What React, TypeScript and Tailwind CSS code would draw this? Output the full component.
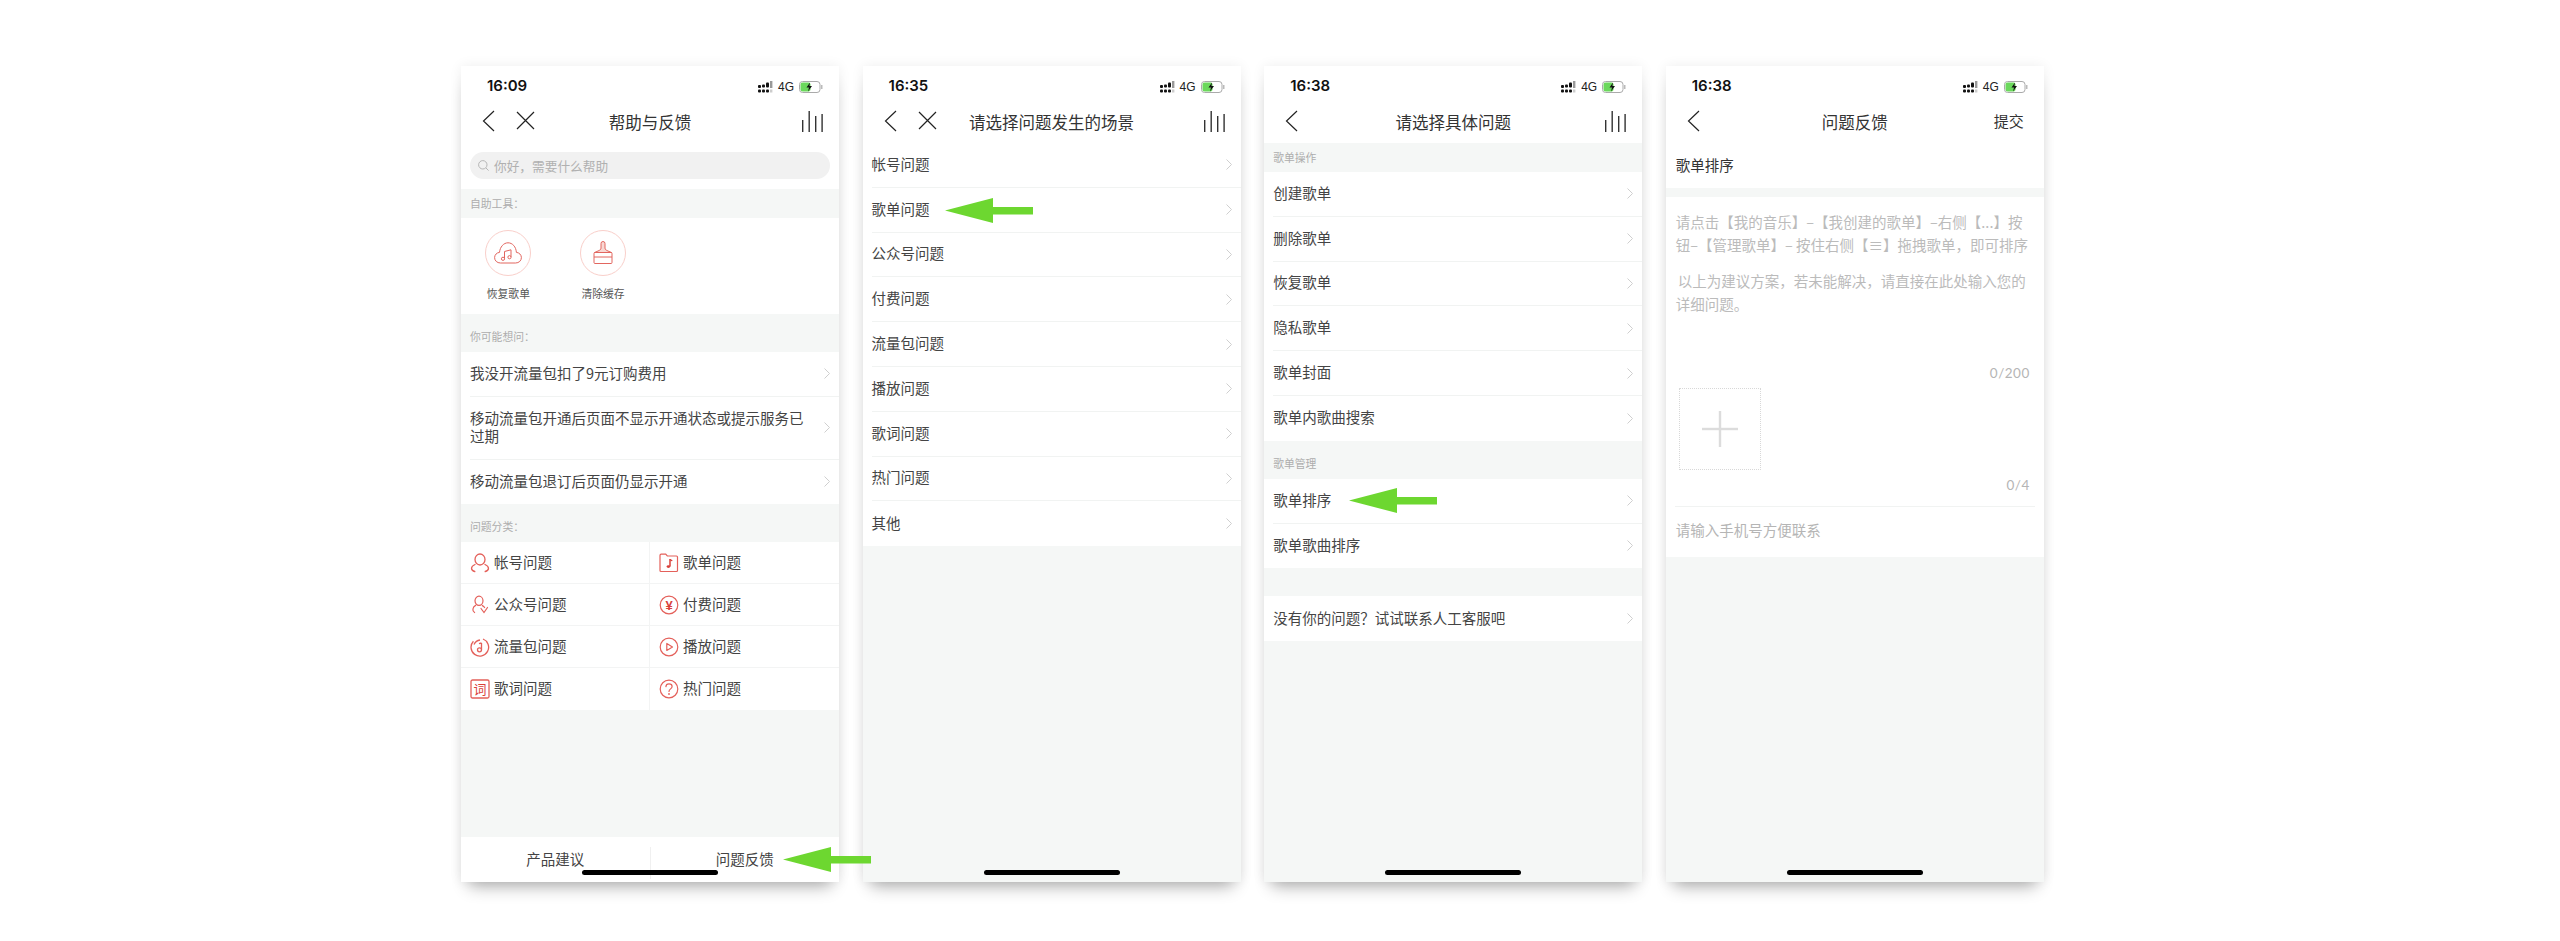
import React from 'react';

const cjk = { fontFamily: '"Noto Sans CJK SC", "Noto Sans", sans-serif' };
const RED = '#e4605a';

function StatusBar({ time }: { time: string }) {
  return (
    <div className="flex h-[34px] shrink-0 items-end justify-between pl-[26px] pr-[16px] pb-[4.500px]">
      <span className="text-[15px] leading-[20px] font-semibold text-[#111]" style={{ fontFamily: 'Inter, sans-serif' }}>{time}</span>
      <div className="flex items-center gap-[5px] pb-[2px]">
        <svg width="15" height="12" viewBox="0 0 15 12">
          <g fill="#111">
            <rect x="0" y="4" width="3" height="3" rx="1" />
            <rect x="0" y="8.500" width="3" height="3" rx="1" />
            <rect x="4" y="3.500" width="3" height="3" rx="1" />
            <rect x="4" y="8.500" width="3" height="3" rx="1" />
            <rect x="8" y="1.500" width="3" height="5" rx="1" />
            <rect x="8" y="8.500" width="3" height="3" rx="1" />
          </g>
          <rect x="12" y="0" width="2.400" height="7" fill="#999" />
          <rect x="12" y="8.500" width="2.400" height="3" fill="#ccc" />
        </svg>
        <span className="text-[12px] leading-[14px] text-[#222]" style={{ fontFamily: '"Liberation Sans", sans-serif' }}>4G</span>
        <svg width="24" height="12" viewBox="0 0 24 12">
          <rect x="0.500" y="0.500" width="20.500" height="11" rx="3" fill="#fff" stroke="#aaa" />
          <rect x="1.500" y="1.500" width="10" height="9" rx="2" fill="#6bd85c" />
          <path d="M11 1.500 7.500 6.600h2.500l-1 3.900 4-5.400h-2.600z" fill="#111" />
          <rect x="22.200" y="4" width="1.200" height="4" fill="#aaa" />
        </svg>
      </div>
    </div>
  );
}

function BackIcon() {
  return (
    <svg width="13" height="22" viewBox="0 0 13 22" fill="none" stroke="#222" strokeWidth="1.200">
      <path d="M12 1 1.500 11 12 21" />
    </svg>
  );
}

function CloseIcon() {
  return (
    <svg width="19" height="19" viewBox="0 0 19 19" fill="none" stroke="#222" strokeWidth="1.200">
      <path d="M1 1 18 18M18 1 1 18" />
    </svg>
  );
}

function BarsIcon() {
  return (
    <svg width="21" height="21" viewBox="0 0 21 21" fill="#333">
      <rect x="0" y="9" width="1.400" height="12" />
      <rect x="6.500" y="0" width="1.400" height="21" />
      <rect x="13" y="5" width="1.400" height="16" />
      <rect x="19.400" y="3" width="1.400" height="18" />
    </svg>
  );
}

function NavBar({ title, close, right }: { title: string; close?: boolean; right?: React.ReactNode }) {
  return (
    <div className="grid h-[43px] shrink-0 grid-cols-[1fr_auto_1fr] items-center bg-white px-[21px]">
      <div className="flex items-center gap-[21px] pb-[2px]">
        <BackIcon />
        {close && <CloseIcon />}
      </div>
      <div className="text-[16.500px] leading-[24px] text-[#333]" style={cjk}>{title}</div>
      <div className="-mr-[5px] flex justify-end pb-[1px]">{right ?? <BarsIcon />}</div>
    </div>
  );
}

function Chevron() {
  return (
    <svg width="6" height="11" viewBox="0 0 6 11" fill="none" stroke="#cfcfcf" strokeWidth="1" className="shrink-0">
      <path d="M.5.5 5.500 5.500.5 10.500" />
    </svg>
  );
}

function Row({ label, last }: { label: React.ReactNode; last?: boolean }) {
  return (
    <div className="bg-white pl-[9px]">
      <div className={`flex h-[44.800px] items-center justify-between pr-[9px] ${last ? '' : 'border-b border-[#f1f3f2]'}`}>
        <span className="pb-[2px] text-[14.500px] leading-[18px] text-[#444]" style={cjk}>{label}</span>
        <Chevron />
      </div>
    </div>
  );
}

function SectionLabel({ children, tall }: { children: string; tall?: boolean }) {
  return (
    <div className={`flex items-end pl-[9px] text-[10.800px] text-[#adadad] ${tall ? 'h-[38px] pb-[8px]' : 'h-[29px] pb-[7px]'}`} style={cjk}>
      <span className="leading-[16px]">{children}</span>
    </div>
  );
}

function HomeBar() {
  return <div className="absolute bottom-[7px] left-[121px] h-[5px] w-[136px] rounded-full bg-black" />;
}

function Arrow({ className }: { className: string }) {
  return (
    <svg width="88" height="25" viewBox="0 0 88 25" className={`absolute z-10 ${className}`}>
      <path d="M0 12.500 48 0v9h40v7.500H48V25z" fill="#6dd730" />
    </svg>
  );
}

function Phone({ children }: { children: React.ReactNode }) {
  return (
    <div className="relative flex h-[816px] w-[378px] shrink-0 flex-col bg-[#f5f7f6] shadow-[0_12px_16px_-8px_rgba(0,0,0,0.32),0_0_12px_rgba(0,0,0,0.07)]">
      {children}
    </div>
  );
}

// category icons
function PersonIcon() {
  return (
    <svg width="20" height="20" viewBox="0 0 20 20" fill="none" stroke={RED} strokeWidth="1.300">
      <ellipse cx="10" cy="6.500" rx="5" ry="5.500" />
      <path d="M4.800 18.500C.6 17.500.2 13.500 5 11.500M15.200 18.500c4.200-1 4.600-5-.2-7" strokeLinecap="round" />
    </svg>
  );
}

function FolderIcon() {
  return (
    <svg width="20" height="20" viewBox="0 0 20 20" fill="none" stroke={RED} strokeWidth="1.200">
      <path d="M1 2.500c0-.8.5-1.300 1.200-1.300h4.500l1.600 1.800h9.200c.6 0 1 .5 1 1v13.500c0 .6-.4 1-1 1H2c-.6 0-1-.4-1-1z" />
      <path d="M11 6v7.500" stroke="#d9403a" strokeWidth="1.500" />
      <path d="M11 6.200c.5 1 1.600 1.300 2.300 1.600" stroke="#d9403a" />
      <ellipse cx="9.400" cy="13.600" rx="1.800" ry="1.400" fill="#d9403a" stroke="none" />
    </svg>
  );
}

function SubscribeIcon() {
  return (
    <svg width="20" height="20" viewBox="0 0 20 20" fill="none" stroke={RED} strokeWidth="1.200">
      <ellipse cx="9" cy="5.800" rx="4" ry="4.600" />
      <path d="M4.600 17.500C1.800 16 2.600 12 5.600 10.400M12.400 10.600c1 .5 1.700 1.100 2.200 1.900" strokeLinecap="round" />
      <path d="M11 13.500l3 4 3.500-5" strokeLinecap="round" />
    </svg>
  );
}

function YenIcon() {
  return (
    <svg width="20" height="20" viewBox="0 0 20 20" fill="none" stroke={RED} strokeWidth="1.200">
      <circle cx="10" cy="10" r="8.800" />
      <text x="10" y="15" textAnchor="middle" fontSize="13" fill="#d9403a" stroke="none" fontWeight="700" fontFamily='"Liberation Sans", sans-serif'>¥</text>
    </svg>
  );
}

function DiscIcon() {
  return (
    <svg width="20" height="20" viewBox="0 0 20 20" fill="none" stroke={RED} strokeWidth="1.300">
      <path d="M13 2A8.800 8.800 0 1 1 3.400 4.200" />
      <path d="M4 7.500C5.200 5 7.500 3.400 10 3" />
      <path d="M11.500 6v6.500" />
      <circle cx="9.500" cy="12.800" r="2" />
      <path d="M11.500 6l-2.500.7" />
    </svg>
  );
}

function PlayIcon() {
  return (
    <svg width="20" height="20" viewBox="0 0 20 20" fill="none" stroke={RED} strokeWidth="1.200">
      <circle cx="10" cy="10" r="8.800" />
      <path d="M7.800 6.500v7l5.700-3.500z" strokeLinejoin="round" />
    </svg>
  );
}

function LyricIcon() {
  return (
    <svg width="20" height="20" viewBox="0 0 20 20" fill="none" stroke={RED} strokeWidth="1.300">
      <rect x="1" y="1" width="18" height="18" rx="1.500" />
      <text x="10" y="15.200" textAnchor="middle" fontSize="13" fill="#d9403a" stroke="none" fontFamily='"Noto Sans CJK SC", sans-serif'>词</text>
    </svg>
  );
}

function HelpIcon() {
  return (
    <svg width="20" height="20" viewBox="0 0 20 20" fill="none" stroke={RED} strokeWidth="1.200">
      <circle cx="10" cy="10" r="8.800" />
      <path d="M6.900 7.600C7 5.700 8.400 4.800 10 4.800c1.800 0 3.100 1.100 3.100 2.700 0 2.400-3.100 2.400-3.100 5" strokeLinecap="round" />
      <circle cx="10" cy="15" r=".9" fill={RED} stroke="none" />
    </svg>
  );
}

function CloudIcon() {
  return (
    <svg width="28" height="22" viewBox="0 0 28 22" fill="none" stroke="#e2665f" strokeWidth="1">
      <path d="M6.500 21C3 21 .6 18.600.6 15.600c0-2.800 2.200-5 4.900-5.200C6 5 9.600.8 14 .8c4.500 0 8 4 8.400 9.600 2.800.2 5 2.400 5 5.200 0 3-2.400 5.400-5.900 5.400z" />
      <path d="M10.500 9.500l6.500-1.700v7" />
      <path d="M10.500 9.500v7" />
      <circle cx="9" cy="16.800" r="1.600" />
      <circle cx="15.500" cy="15.200" r="1.600" />
    </svg>
  );
}

function BrushIcon() {
  return (
    <svg width="20" height="24" viewBox="0 0 20 24" fill="none" stroke="#e2665f" strokeWidth="1">
      <path d="M8 7V2.500a2 2 0 0 1 4 0V7c0 1.500 1 2.200 3 3l3.500 1.500H1.500L5 10c2-.8 3-1.500 3-3z" fill="#f8d8d4" />
      <rect x="1" y="11.500" width="18" height="11" rx="1" />
      <path d="M1 16h18" />
    </svg>
  );
}

function HelpScreen() {
  const faq = ['我没开流量包扣了9元订购费用', '移动流量包开通后页面不显示开通状态或提示服务已过期', '移动流量包退订后页面仍显示开通'];
  const tools: [string, React.ReactNode][] = [
    ['恢复歌单', <CloudIcon />],
    ['清除缓存', <BrushIcon />],
  ];
  const cats: [React.ReactNode, string][] = [
    [<PersonIcon />, '帐号问题'],
    [<FolderIcon />, '歌单问题'],
    [<SubscribeIcon />, '公众号问题'],
    [<YenIcon />, '付费问题'],
    [<DiscIcon />, '流量包问题'],
    [<PlayIcon />, '播放问题'],
    [<LyricIcon />, '歌词问题'],
    [<HelpIcon />, '热门问题'],
  ];
  return (
    <Phone>
      <div className="bg-white"><StatusBar time="16:09" /></div>
      <NavBar title="帮助与反馈" close />
      <div className="h-[46px] shrink-0 bg-white px-[9px] pt-[9px]">
        <div className="flex h-[27px] items-center gap-[5px] rounded-full bg-[#f1f1f1] pl-[8px] text-[12.700px] text-[#b0b0b0]" style={cjk}>
          <svg width="11" height="11" viewBox="0 0 11 11" fill="none" stroke="#b5b5b5" strokeWidth="1">
            <circle cx="4.800" cy="4.800" r="4.200" />
            <path d="M8 8l2.600 2.600" />
          </svg>
          你好，需要什么帮助
        </div>
      </div>
      <SectionLabel>自助工具：</SectionLabel>
      <div className="flex h-[96px] shrink-0 bg-white pt-[12px]">
        {tools.map(([label, icon]) => (
          <div key={label} className="flex w-[94.700px] flex-col items-center">
            <div className="flex h-[46px] w-[46px] items-center justify-center rounded-full border border-[#f9cfca]">{icon}</div>
            <div className="mt-[8px] text-[10.800px] leading-[18px] text-[#555]" style={cjk}>{label}</div>
          </div>
        ))}
      </div>
      <SectionLabel tall>你可能想问：</SectionLabel>
      <div className="bg-white pl-[9px]">
        {faq.map((q, i) => (
          <div key={q} className={`flex items-center justify-between pr-[9px] ${i === 1 ? 'h-[63px]' : 'h-[44.500px]'} ${i < 2 ? 'border-b border-[#f1f3f2]' : ''}`}>
            <span className="w-[340px] pb-[2px] text-[14.500px] leading-[18px] text-[#444]" style={cjk}>{q}</span>
            <Chevron />
          </div>
        ))}
      </div>
      <SectionLabel tall>问题分类：</SectionLabel>
      <div className="grid shrink-0 grid-cols-2 bg-white">
        {cats.map(([icon, label], i) => (
          <div key={label} className={`flex h-[42px] items-center gap-[4px] pl-[9px] ${i < 6 ? 'border-b border-[#f3f4f4]' : ''} ${i % 2 === 0 ? 'border-r border-[#f3f4f4]' : ''}`}>
            {icon}
            <span className="pb-[2px] text-[14.500px] text-[#444]" style={cjk}>{label}</span>
          </div>
        ))}
      </div>
      <div className="flex-1" />
      <div className="flex h-[45px] shrink-0 bg-white text-[14.500px] text-[#444]" style={cjk}>
        <div className="mt-[10px] flex h-[32px] flex-1 items-center justify-center border-r border-[#f0f0f0] pb-[8px]">产品建议</div>
        <div className="mt-[10px] flex h-[32px] flex-1 items-center justify-center pb-[8px]">问题反馈</div>
      </div>
      <HomeBar />
      <Arrow className="left-[322px] top-[781px]" />
    </Phone>
  );
}

function SceneScreen() {
  const items = ['帐号问题', '歌单问题', '公众号问题', '付费问题', '流量包问题', '播放问题', '歌词问题', '热门问题', '其他'];
  return (
    <Phone>
      <div className="bg-white"><StatusBar time="16:35" /></div>
      <NavBar title="请选择问题发生的场景" close />
      {items.map((t, i) => <Row key={t} label={t} last={i === items.length - 1} />)}
      <HomeBar />
      <Arrow className="left-[82px] top-[132px]" />
    </Phone>
  );
}

function TopicScreen() {
  const ops = ['创建歌单', '删除歌单', '恢复歌单', '隐私歌单', '歌单封面', '歌单内歌曲搜索'];
  return (
    <Phone>
      <div className="bg-white"><StatusBar time="16:38" /></div>
      <NavBar title="请选择具体问题" />
      <SectionLabel>歌单操作</SectionLabel>
      {ops.map((t, i) => <Row key={t} label={t} last={i === ops.length - 1} />)}
      <SectionLabel tall>歌单管理</SectionLabel>
      <Row label="歌单排序" />
      <Row label="歌单歌曲排序" last />
      <div className="h-[28px] shrink-0" />
      <Row label="没有你的问题？试试联系人工客服吧" last />
      <HomeBar />
      <Arrow className="left-[85px] top-[422px]" />
    </Phone>
  );
}

function FeedbackScreen() {
  return (
    <Phone>
      <div className="bg-white"><StatusBar time="16:38" /></div>
      <NavBar title="问题反馈" right={<span className="pr-[4px] text-[15px] leading-[24px] text-[#333]" style={cjk}>提交</span>} />
      <div className="flex h-[45px] shrink-0 items-center bg-white pb-[2px] pl-[10px] text-[14.500px] text-[#333]" style={cjk}>歌单排序</div>
      <div className="mt-[9px] flex h-[360px] shrink-0 flex-col bg-white text-[#bbbbbb]" style={cjk}>
        <div className="px-[10px] pt-[13px] text-[14.500px] leading-[23px]">
          <div className="whitespace-nowrap">请点击【我的音乐】–【我创建的歌单】–右侧【...】按</div>
          <div className="whitespace-nowrap">钮–【管理歌单】– 按住右侧【≡】拖拽歌单，即可排序</div>
          <div className="mt-[13px] whitespace-nowrap pl-[2px]">以上为建议方案，若未能解决，请直接在此处输入您的</div>
          <div className="whitespace-nowrap">详细问题。</div>
        </div>
        <div className="mt-[48px] pr-[14px] text-right text-[13.500px] leading-[20px] tracking-[0.500px] text-[#b5b5b5]" style={{ fontFamily: 'Lato, sans-serif' }}>0/200</div>
        <div className="ml-[13px] mt-[5px] flex h-[82px] w-[82px] items-center justify-center border border-dotted border-[#d8d8d8]">
          <svg width="36" height="36" viewBox="0 0 36 36" fill="#dcdcdc">
            <rect x="16.800" y="0" width="2.400" height="36" />
            <rect x="0" y="16.800" width="36" height="2.400" />
          </svg>
        </div>
        <div className="mt-[5px] pr-[14px] text-right text-[13.500px] leading-[20px] tracking-[0.500px] text-[#b5b5b5]" style={{ fontFamily: 'Lato, sans-serif' }}>0/4</div>
        <div className="mx-[9px] mt-[11px] border-t border-[#f1f3f2] pl-[1px] pt-[13px] text-[14.500px] leading-[20px] text-[#b5b5b5]">请输入手机号方便联系</div>
      </div>
      <HomeBar />
    </Phone>
  );
}

export default function App() {
  return (
    <div className="h-[941px] w-[2560px] overflow-hidden bg-white pl-[461px] pt-[66px]">
      <div className="flex gap-[23.600px]">
        <HelpScreen />
        <SceneScreen />
        <TopicScreen />
        <FeedbackScreen />
      </div>
    </div>
  );
}
